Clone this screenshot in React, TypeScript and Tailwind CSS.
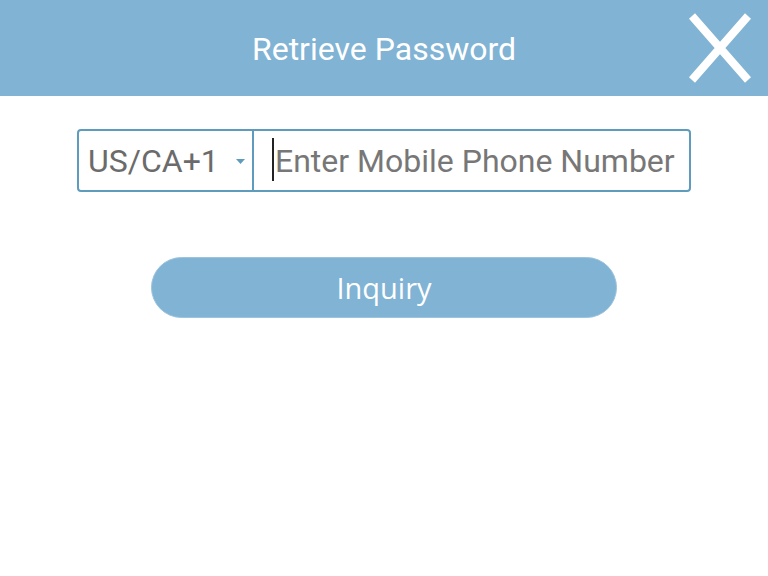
import React from "react";

export default function App() {
  return (
    <div className="w-[768px] h-[576px] bg-white flex flex-col" style={{ fontFamily: "Roboto, 'Noto Sans', sans-serif" }}>
      <div className="relative h-[96px] bg-[#81b3d4] flex items-center justify-center">
        <span className="text-white text-[32px] leading-none pt-[2px]">Retrieve Password</span>
        <svg className="absolute left-[688px] top-[13px]" width="64" height="70" viewBox="0 0 64 70">
          <path d="M4 3 L60 67 M60 3 L4 67" stroke="white" strokeWidth="8" fill="none" />
        </svg>
      </div>
      <div className="flex justify-center pt-[33px]">
        <div className="w-[614px] h-[63px] border-2 border-[#5f9bbd] rounded-[4px] flex items-stretch">
          <div className="w-[175px] flex items-center pl-[9px] border-r-2 border-[#5f9bbd] relative">
            <span className="text-[#6b6b6b] text-[32px] leading-none">US/CA+1</span>
            <svg className="absolute left-[157px] top-[28px]" width="9" height="6" viewBox="0 0 9 6">
              <path d="M0 0 L9 0 L4.5 5 Z" fill="#5f9bbd" />
            </svg>
          </div>
          <div className="flex-1 flex items-center pl-[18px]">
            <span className="w-[2px] h-[43px] bg-[#222] mr-[1px] mb-[3px]"></span>
            <span className="text-[#777] text-[32px] leading-none">Enter Mobile Phone Number</span>
          </div>
        </div>
      </div>
      <div className="flex justify-center pt-[65px]">
        <button className="w-[466px] h-[61px] rounded-full bg-[#81b3d4] border border-[#9cc4de] text-white text-[29px] flex items-center justify-center" style={{ fontFamily: "'Open Sans', 'Noto Sans', sans-serif" }}>
          Inquiry
        </button>
      </div>
    </div>
  );
}
